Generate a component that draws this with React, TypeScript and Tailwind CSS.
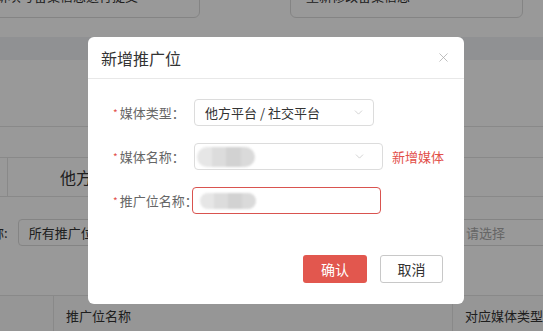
import { ChevronDown, X } from 'lucide-react';

const font = { fontFamily: '"Noto Sans CJK SC", "Noto Sans", sans-serif' };

const Blob = ({ className }: { className: string }) => (
  <div className={`flex overflow-hidden rounded-full blur-[1px] ${className}`}>
    <div className="h-full flex-1 bg-[#e6e6e6]" />
    <div className="h-full flex-1 bg-[#dcdcdc]" />
    <div className="h-full flex-1 bg-[#d2d2d2]" />
    <div className="h-full flex-1 bg-[#dadada]" />
  </div>
);

const Label = ({ text, width }: { text: string; width: string }) => (
  <div className={`flex shrink-0 items-center whitespace-nowrap text-[13px] text-[#666] ${width}`}>
    <span className="mr-[2px] text-[10px] text-[#e2504a]">*</span>
    {text}
  </div>
);

export default function App() {
  return (
    <div className="relative h-[331px] w-[543px] overflow-hidden bg-white text-[#333]" style={font}>
      {/* page behind the dialog */}
      <div className="relative h-[37px]">
        <div className="absolute -top-[26px] left-[-20px] flex h-[44px] w-[220px] items-center rounded-md border border-[#ddd] text-[13px]">
          <span className="ml-[-12px] whitespace-nowrap">请重新填写备案信息进行提交</span>
        </div>
        <div className="absolute -top-[26px] left-[290px] flex h-[44px] w-[233px] items-center rounded-md border border-[#ddd] pl-[15px] text-[13px]">
          重新修改备案信息
        </div>
      </div>
      <div className="h-[23px] bg-[#f0f2f5]" />
      <div className="h-[67px] border-b border-[#e4e4e4]" />
      <div className="h-[31px] border-b border-[#e4e4e4]" />
      <div className="flex h-[39px] border-b border-[#e4e4e4]">
        <div className="w-[8px] border-r border-[#e4e4e4]" />
        <div className="flex items-center pl-[52px] text-[16px]">他方平台</div>
      </div>
      <div className="mt-[22px] flex h-[27px] items-center">
        <span className="ml-[-22px] whitespace-nowrap text-[13px]">名称:</span>
        <div className="ml-[10px] flex h-[27px] w-[120px] items-center rounded border border-[#ddd] pl-[10px] text-[13px]">
          所有推广位
        </div>
        <div className="ml-auto flex h-[27px] w-[80px] items-center border-y border-[#ddd] pl-[3px] text-[13px] text-[#aaa]">
          请选择
        </div>
      </div>
      <div className="mt-[49px] flex h-[40px] border-t border-[#e4e4e4] bg-[#fafafa] text-[13px]">
        <div className="w-[54px] border-r border-[#e4e4e4]" />
        <div className="flex w-[400px] items-center border-r border-[#e4e4e4] pl-[12px]">推广位名称</div>
        <div className="flex items-center whitespace-nowrap pl-[12px]">对应媒体类型</div>
      </div>

      {/* overlay */}
      <div className="absolute inset-0 bg-black/40" />

      {/* dialog */}
      <div className="absolute left-[88px] top-[37px] h-[267px] w-[376px] rounded-md bg-white">
        <div className="flex h-[42px] items-center justify-between border-b border-[#e8e8e8] pl-[13px] pr-[13px]">
          <span className="text-[16px] text-[#333]">新增推广位</span>
          <X size={15} strokeWidth={1.2} className="text-[#aaa]" />
        </div>
        <div className="flex flex-col gap-[17px] pl-[25px] pt-[20px]">
          <div className="flex h-[27px] items-center">
            <Label text="媒体类型：" width="w-[81px]" />
            <div className="flex h-[27px] w-[180px] items-center justify-between rounded border border-[#dcdcdc] pl-[10px] pr-[8px] text-[13px] text-[#333]">
              他方平台 / 社交平台
              <ChevronDown size={13} strokeWidth={1.2} className="text-[#bbb]" />
            </div>
          </div>
          <div className="flex h-[27px] items-center">
            <Label text="媒体名称：" width="w-[81px]" />
            <div className="flex h-[27px] w-[189px] items-center justify-between rounded border border-[#dcdcdc] pl-[2px] pr-[16px]">
              <Blob className="h-[20px] w-[58px]" />
              <ChevronDown size={13} strokeWidth={1.2} className="text-[#bbb]" />
            </div>
            <span className="ml-[9px] text-[13px] text-[#e2504a]">新增媒体</span>
          </div>
          <div className="flex h-[27px] items-center">
            <Label text="推广位名称：" width="w-[79px]" />
            <div className="flex h-[27px] w-[189px] items-center rounded-sm border border-[#d9534f] pl-[7px]">
              <Blob className="h-[16px] w-[56px]" />
            </div>
          </div>
        </div>
        <div className="mt-[41px] flex justify-end gap-[13px] pr-[21px]">
          <button className="flex h-[28px] w-[64px] items-center justify-center rounded-[3px] bg-[#e2574e] text-[14px] text-white">
            确认
          </button>
          <button className="flex h-[28px] w-[63px] items-center justify-center rounded-[3px] border border-[#c8c8c8] bg-white text-[14px] text-[#333]">
            取消
          </button>
        </div>
      </div>
    </div>
  );
}
